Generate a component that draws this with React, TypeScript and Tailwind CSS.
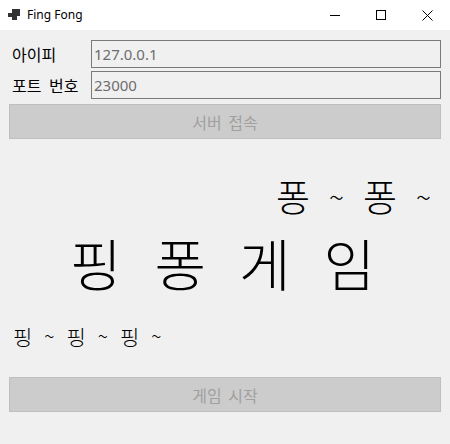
const font = { fontFamily: '"Noto Sans CJK KR", "Noto Sans", sans-serif' };
const latin = { fontFamily: '"Noto Sans", "Noto Sans CJK KR", sans-serif' };

function TitleBar() {
  return (
    <div className="flex h-[30px] items-center bg-white">
      <svg className="ml-[8px]" width="12" height="12" viewBox="0 0 12 12">
        <rect x="0" y="4" width="4" height="4" fill="#333" />
        <rect x="4" y="0" width="8" height="7" fill="#333" />
        <rect x="4" y="7" width="5" height="4" fill="#333" />
      </svg>
      <span className="ml-[7px] text-[12px] text-black" style={latin}>
        Fing Fong
      </span>
      <div className="ml-auto flex h-full">
        <div className="flex h-full w-[46px] items-center justify-center">
          <svg width="10" height="10" viewBox="0 0 10 10">
            <path d="M0 5.5h10" stroke="#000" strokeWidth="1" />
          </svg>
        </div>
        <div className="flex h-full w-[46px] items-center justify-center">
          <svg width="10" height="10" viewBox="0 0 10 10">
            <rect x="0.5" y="0.5" width="9" height="9" fill="none" stroke="#000" strokeWidth="1" />
          </svg>
        </div>
        <div className="flex h-full w-[46px] items-center justify-center">
          <svg width="11" height="11" viewBox="0 0 11 11">
            <path d="M0.5 0.5l10 10M10.5 0.5l-10 10" stroke="#000" strokeWidth="1" />
          </svg>
        </div>
      </div>
    </div>
  );
}

function Field({ label, value }: { label: string; value: string }) {
  return (
    <div className="flex h-[28px] items-center">
      <span className="w-[91px] pl-[12px] text-[16px] text-black [word-spacing:4px]">{label}</span>
      <div
        className="flex h-full w-[350px] items-center border border-[#7a7a7a] bg-[#f0f0f0] pl-[2px] text-[15px] text-[#6d6d6d]"
        style={latin}
      >
        {value}
      </div>
    </div>
  );
}

function DisabledButton({ text }: { text: string }) {
  return (
    <div className="mx-[9px] flex h-[35px] items-center justify-center border border-[#bfbfbf] bg-[#cccccc] text-[16px] text-[#a0a0a0] [word-spacing:3px]">
      {text}
    </div>
  );
}

export default function App() {
  return (
    <div className="h-[444px] w-[450px] overflow-hidden bg-[#f0f0f0]" style={font}>
      <TitleBar />
      <div className="flex flex-col pt-[10px]">
        <Field label="아이피" value="127.0.0.1" />
        <div className="h-[3px]" />
        <Field label="포트 번호" value="23000" />
        <div className="h-[5px]" />
        <DisabledButton text="서버 접속" />

        <div className="mt-[36px] flex items-center justify-end gap-[19px] pr-[19px] text-[37px] font-light leading-[42px] text-black">
          <span>퐁</span>
          <span className="text-[28px]">~</span>
          <span>퐁</span>
          <span className="text-[28px]">~</span>
        </div>

        <div className="mt-[13px] flex gap-[33px] pl-[70px] text-[56px] font-light leading-[64px] text-black">
          <span>핑</span>
          <span>퐁</span>
          <span>게</span>
          <span>임</span>
        </div>

        <div className="mt-[28px] flex items-center gap-[12px] pl-[13px] text-[21px] font-light leading-[28px] text-black">
          <span>핑</span>
          <span className="text-[19px]">~</span>
          <span>핑</span>
          <span className="text-[19px]">~</span>
          <span>핑</span>
          <span className="text-[19px]">~</span>
        </div>

        <div className="h-[27px]" />
        <DisabledButton text="게임 시작" />
      </div>
    </div>
  );
}
